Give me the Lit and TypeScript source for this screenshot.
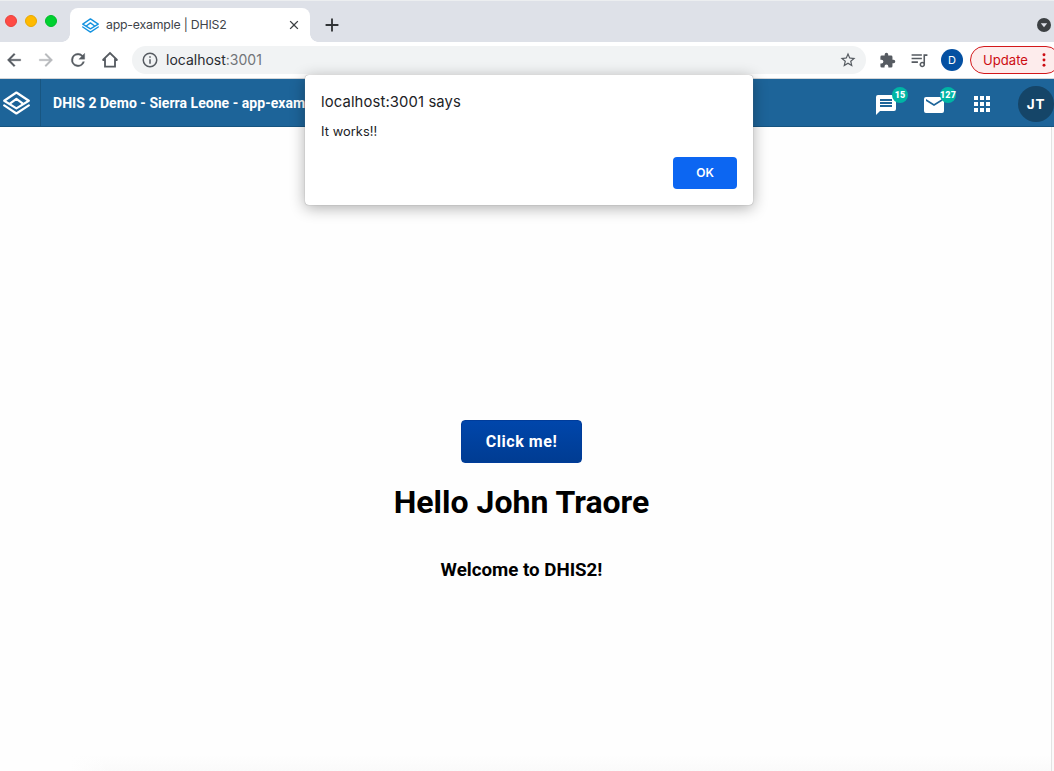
import { LitElement, html, css, svg } from "lit";
import { customElement, property } from "lit/decorators.js";

const logo = svg`<g fill="none" stroke="currentColor" stroke-linejoin="round" stroke-linecap="round" stroke-width="2.2">
  <path d="M13.5 1.3 26 9.6 13.5 17.200 1.2 9.6Z"/><path d="M7.3 12.3 13.5 7.600 19.700 12.3"/><path d="M1.2 14.2 13.5 22.4 26 14.2"/></g>`;

const glyphs: Record<string, unknown> = {
  back: svg`<path stroke="currentColor" stroke-width=".4" d="M20 11H7.83l5.59-5.59L12 4l-8 8 8 8 1.41-1.41L7.83 13H20z"/>`,
  forward: svg`<path stroke="currentColor" stroke-width=".4" d="m12 4-1.41 1.41L16.17 11H4v2h12.17l-5.58 5.59L12 20l8-8z"/>`,
  reload: svg`<path stroke="currentColor" stroke-width=".4" d="M17.65 6.35A7.96 7.96 0 0 0 12 4a8 8 0 1 0 7.73 10h-2.08A6 6 0 1 1 12 6c1.66 0 3.14.69 4.22 1.78L13 11h7V4z"/>`,
  home: svg`<path fill="none" stroke="currentColor" stroke-width="2.2" d="M3.2 12.2 12 3.6l8.8 8.6M6 10v10h12V10M3 12h3m12 0h3"/>`,
  info: svg`<path d="M11 17h2v-6h-2zm1-15a10 10 0 1 0 0 20 10 10 0 0 0 0-20m0 18a8 8 0 1 1 0-16 8 8 0 0 1 0 16M11 9h2V7h-2z"/>`,
  star: svg`<path d="m22 9.24-7.19-.62L12 2 9.19 8.63 2 9.24l5.46 4.73L5.82 21 12 17.27 18.18 21l-1.63-7.03zM12 15.4l-3.76 2.27 1-4.28-3.32-2.88 4.38-.38L12 6.1l1.71 4.04 4.38.38-3.32 2.88 1 4.28z"/>`,
  puzzle: svg`<path d="M20.5 11H19V7a2 2 0 0 0-2-2h-4V3.500a2.500 2.500 0 0 0-5 0V5H4a2 2 0 0 0-2 2v3.800h1.500a2.700 2.700 0 0 1 0 5.400H2V20a2 2 0 0 0 2 2h3.800v-1.500a2.700 2.700 0 0 1 5.400 0V22H17a2 2 0 0 0 2-2v-4h1.500a2.500 2.500 0 0 0 0-5"/>`,
  queue: svg`<path d="M2 4h13v2H2zm0 4.500h13v2H2zM2 13h8v2H2zM17 4h5v2.300h-3V17a3.500 3.500 0 1 1-2-3.100zm-1.500 11.500a1.500 1.500 0 1 0 0 3 1.500 1.500 0 0 0 0-3" fill-rule="evenodd"/>`,
  close: svg`<path d="M18.500 6.910 17.090 5.500 12 10.590 6.910 5.500 5.500 6.910 10.590 12 5.500 17.090 6.910 18.500 12 13.410 17.090 18.500 18.500 17.090 13.410 12z"/>`,
  plus: svg`<path d="M19 13h-6v6h-2v-6H5v-2h6V5h2v6h6z"/>`,
  more: svg`<circle cx="12" cy="4" r="2.200"/><circle cx="12" cy="12" r="2.200"/><circle cx="12" cy="20" r="2.200"/>`,
  message: svg`<path d="M20 2H4a2 2 0 0 0-2 2v18l4-4h14a2 2 0 0 0 2-2V4a2 2 0 0 0-2-2m-2 12H6v-2h12zm0-3H6V9h12zm0-3H6V6h12z"/>`,
  mail: svg`<path d="M20 4H4a2 2 0 0 0-2 2v12a2 2 0 0 0 2 2h16a2 2 0 0 0 2-2V6a2 2 0 0 0-2-2m0 4-8 5-8-5V6l8 5 8-5z"/>`,
  apps: svg`<path d="M4 8h4V4H4zm6 12h4v-4h-4zm-6 0h4v-4H4zm0-6h4v-4H4zm6 0h4v-4h-4zm6-10v4h4V4zm-6 4h4V4h-4zm6 6h4v-4h-4zm0 6h4v-4h-4z"/>`,
  dropdown: svg`<circle cx="12" cy="12" r="12"/><path fill="#dee1e8" d="M6.500 9h11L12 16z"/>`,
};

@customElement("ui-icon")
export class UiIcon extends LitElement {
  @property() name = "";
  static styles = css`
    :host { display: block; width: 20px; height: 20px; flex: none; }
    svg { display: block; width: 100%; height: 100%; fill: currentColor; }
  `;
  render() {
    return this.name === "logo"
      ? html`<svg viewBox="0 0 27.200 23.700">${logo}</svg>`
      : html`<svg viewBox="0 0 24 24">${glyphs[this.name]}</svg>`;
  }
}

@customElement("app-root")
export class AppRoot extends LitElement {
  static styles = css`
    :host { display: flex; flex-direction: column; position: relative; width: 100%; height: 771px; overflow: hidden; background: #fafafa; font-family: Roboto, sans-serif; color: #000; }
    * { box-sizing: border-box; }
    .tabs { display: flex; height: 42px; flex: none; background: #dee1e8; border-top: 1px solid #eceef0; padding-left: 5px; }
    .lights { display: flex; gap: 8px; padding-top: 14px; width: 65px; }
    .light { width: 12px; height: 12px; border-radius: 50%; background: #ff4b45; border: 1px solid #e8423d; }
    .yellow { background: #ffba00; border-color: #e8a900; }
    .green { background: #00d130; border-color: #00bb2a; }
    .tab { position: relative; display: flex; align-items: center; width: 240px; height: 34px; margin-top: 7px; padding: 0 8px 0 12px; background: #fff; border-radius: 8px 8px 0 0; }
    .tab::before, .tab::after { content: ""; position: absolute; bottom: 0; width: 8px; height: 8px; }
    .tab::before { left: -8px; background: radial-gradient(circle at 0 0, transparent 7.500px, #fff 8px); }
    .tab::after { right: -8px; background: radial-gradient(circle at 100% 0, transparent 7.500px, #fff 8px); }
    .tab-logo { width: 17px; height: 15px; color: #1593e0; }
    .tab-title { flex: 1; margin-left: 7px; padding-bottom: 1px; font: 12.300px Inter, sans-serif; letter-spacing: -0.200px; color: #40444a; }
    .tab-close { width: 16px; height: 16px; color: #3c4043; }
    .new-tab { width: 22px; height: 22px; margin: 13px 0 0 11px; color: #303336; }
    .tab-menu { width: 14px; height: 14px; margin: 17px 3px 0 auto; color: #3c4043; }
    .toolbar { display: flex; align-items: center; height: 37px; flex: none; padding-left: 4px; background: #fff; border-bottom: 1px solid #d3d5d8; color: #565b61; }
    .nav { display: flex; flex: none; gap: 12px; }
    .disabled { color: #b7b9bc; }
    .address { display: flex; flex: none; align-items: center; width: 734px; height: 28px; margin-left: 12px; padding: 0 9px; border-radius: 14px; background: #f1f3f4; }
    .address-info { width: 18px; height: 18px; }
    .url { flex: 1; margin-left: 7px; padding-bottom: 1px; font: 14px Inter, sans-serif; color: #717579; }
    .host { color: #292c30; }
    .star { width: 18px; height: 18px; }
    .puzzle { width: 17px; height: 17px; margin-left: 13px; }
    .queue { margin-left: 14px; width: 19px; height: 19px; }
    .profile { display: grid; place-items: center; width: 22px; height: 22px; margin-left: 12px; border-radius: 50%; background: #0450a2; color: #fff; font: 11px Inter, sans-serif; flex: none; }
    .update { display: flex; align-items: center; flex: none; width: 90px; height: 28px; margin-left: 7px; padding-left: 12px; border: 1px solid #d3181b; border-radius: 14px; background: #fdecec; color: #cc0c12; font: 13.100px Inter, sans-serif; }
    .more { width: 16px; height: 16px; margin-left: 8px; }
    .header { display: flex; align-items: center; height: 48px; flex: none; background: #1d6499; border-bottom: 1px solid #165480; color: #fff; }
    .brand { display: flex; align-items: center; width: 41px; height: 47px; padding-left: 3px; border-right: 1px solid #185681; }
    .brand-logo { width: 27px; height: 24px; }
    .title { width: 800px; margin-left: 12px; font-size: 14px; font-weight: 700; letter-spacing: 0.040px; white-space: nowrap; }
    .action { position: relative; width: 24px; height: 24px; flex: none; }
    .actions { display: flex; gap: 24px; margin: 2px 0 0 21px; }
    .action ui-icon { width: 24px; height: 24px; }
    .notice { padding-top: 1px; }
    .badge { position: absolute; left: 18px; top: -5px; width: 16px; height: 16px; border-radius: 50%; background: #00b5a5; display: grid; place-items: center; font-size: 9px; font-weight: 900; letter-spacing: 0.100px; }
    .user { display: grid; place-items: center; flex: none; width: 36px; height: 36px; margin: 2px 0 0 24px; border-radius: 50%; background: #154568; font: 700 13.500px Inter, sans-serif; letter-spacing: 0.900px; }
    .content { display: flex; flex: 1; flex-direction: column; align-items: center; margin-right: 2px; padding: 293px 8px 0 0; border-right: 1px solid #e3e3e3; background: linear-gradient(90deg, #fefefe 70px, transparent 110px), linear-gradient(#fefefe 97.500%, #fafafa); }
    .action-button { width: 121px; height: 43px; border: 1px solid #003c9a; border-radius: 4px; background: linear-gradient(#0046ab, #003c92); color: #fff; font: 700 16px Roboto, sans-serif; letter-spacing: 0.550px; padding: 0; }
    h1 { margin: 20px 0 0; font-size: 32px; line-height: 38px; font-weight: 700; }
    h3 { margin: 38px 0 0; font-size: 18.720px; line-height: 22px; font-weight: 700; }
    .dialog { position: absolute; left: 305px; top: 75px; display: flex; flex-direction: column; width: 448px; height: 130px; padding: 17px 16px 16px; border-radius: 4px; background: #fff; box-shadow: 0 0 1px #777, 0 3px 15px rgba(0,0,0,.32); font-family: Inter, sans-serif; color: #202124; }
    .origin { font-size: 14.800px; line-height: 20px; letter-spacing: 0.130px; }
    .message { margin-top: 11px; font-size: 12.800px; line-height: 18px; letter-spacing: 0.080px; }
    .ok { width: 64px; height: 32px; margin: auto 0 0 auto; padding: 0 0 1px; border: 0; border-radius: 4px; background: #0c66f2; color: #fff; font: 600 12px Inter, sans-serif; }
  `;

  render() {
    return html`
      <div class="tabs">
        <div class="lights"><span class="light"></span><span class="light yellow"></span><span class="light green"></span></div>
        <div class="tab"><ui-icon class="tab-logo" name="logo"></ui-icon><span class="tab-title">app-example | DHIS2</span><ui-icon class="tab-close" name="close"></ui-icon></div>
        <ui-icon class="new-tab" name="plus"></ui-icon>
        <ui-icon class="tab-menu" name="dropdown"></ui-icon>
      </div>
      <div class="toolbar">
        <div class="nav"><ui-icon name="back"></ui-icon><ui-icon class="disabled" name="forward"></ui-icon><ui-icon name="reload"></ui-icon><ui-icon name="home"></ui-icon></div>
        <div class="address"><ui-icon class="address-info" name="info"></ui-icon><span class="url"><span class="host">localhost</span>:3001</span><ui-icon class="star" name="star"></ui-icon></div>
        <ui-icon class="puzzle" name="puzzle"></ui-icon><ui-icon class="queue" name="queue"></ui-icon>
        <span class="profile">D</span>
        <div class="update"><span>Update</span><ui-icon class="more" name="more"></ui-icon></div>
      </div>
      <header class="header">
        <div class="brand"><ui-icon class="brand-logo" name="logo"></ui-icon></div>
        <span class="title">DHIS 2 Demo - Sierra Leone - app-example</span>
        <div class="actions">
          <div class="action notice"><ui-icon name="message"></ui-icon><span class="badge">15</span></div>
          <div class="action notice"><ui-icon name="mail"></ui-icon><span class="badge">127</span></div>
          <div class="action"><ui-icon name="apps"></ui-icon></div>
        </div>
        <span class="user">JT</span>
      </header>
      <main class="content"><button class="action-button">Click me!</button><h1>Hello John Traore</h1><h3>Welcome to DHIS2!</h3></main>
      <section class="dialog"><div class="origin">localhost:3001 says</div><div class="message">It works!!</div><button class="ok">OK</button></section>
    `;
  }
}
